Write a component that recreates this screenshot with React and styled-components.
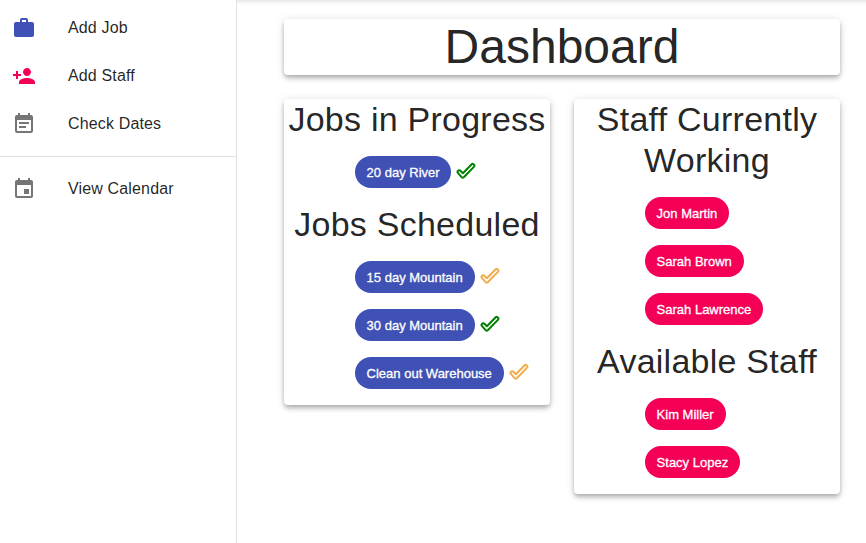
import React from "react";
import styled, { createGlobalStyle } from "styled-components";
import { MdWork, MdPersonAdd, MdEventNote, MdEvent } from "react-icons/md";

const GlobalStyle = createGlobalStyle`
  *, *::before, *::after { box-sizing: border-box; }
  body {
    margin: 0;
    background: #fff;
    color: rgba(0, 0, 0, 0.87);
    font-family: "Liberation Sans", Arial, sans-serif;
    overflow: hidden;
  }
`;

const Layout = styled.div`
  display: flex;
  height: 543px;
`;

const Sidebar = styled.nav`
  flex: 0 0 237px;
  padding-top: 4px;
  border-right: 1px solid #e0e0e0;
  background: #fff;
`;

const NavItem = styled.a`
  display: flex;
  align-items: center;
  height: 48px;
  padding-left: 12px;
  font-size: 16px;
  line-height: 24px;
  letter-spacing: 0.15px;
`;

const NavIcon = styled.span`
  display: flex;
  width: 56px;
  font-size: 24px;
  color: ${(p) => p.$color || "#757575"};
`;

const Divider = styled.hr`
  height: 1px;
  margin: 8px 0;
  border: 0;
  background: #e0e0e0;
`;

const Main = styled.main`
  flex: 1;
  padding: 19px 26px 0 47px;
  background: linear-gradient(#e6e6e6, #f3f3f3 2px, #fcfcfc 4px, #fff 6px);
`;

const Card = styled.section`
  background: #fff;
  border-radius: 4px;
  text-align: center;
  box-shadow: 0 2px 4px -1px rgba(0, 0, 0, 0.2), 0 4px 5px 0 rgba(0, 0, 0, 0.14),
    0 1px 10px 0 rgba(0, 0, 0, 0.12);
`;

const Title = styled.h1`
  margin: 0;
  font-size: 48px;
  font-weight: 400;
  line-height: 56px;
`;

const Columns = styled.div`
  display: grid;
  grid-template-columns: 1fr 1fr;
  align-items: start;
  gap: 24px;
  margin-top: 24px;
`;

const Heading = styled.h2`
  margin: 0;
  font-size: 34px;
  font-weight: 400;
  line-height: 41px;
  letter-spacing: 0.25px;
`;

const List = styled.ul`
  margin: 0;
  padding: 8px 0 8px 71px;
  list-style: none;
`;

const Row = styled.li`
  display: flex;
  align-items: center;
  height: 48px;
`;

const Chip = styled.span`
  height: 32px;
  padding: 0 11.9px 0 11.6px;
  border-radius: 16px;
  background: ${(p) => (p.$staff ? "#f50057" : "#3f51b5")};
  color: #fff;
  font-size: 13px;
  line-height: 33px;
  white-space: nowrap;
  -webkit-text-stroke: 0.3px #fff;
`;

const TickSvg = styled.svg`
  width: 20px;
  height: 18px;
  margin: -2px 0 0 5px;
  fill: none;
  stroke: ${(p) => p.$color};
  stroke-width: 2;
  stroke-linejoin: round;
`;

const Tick = ({ color }) => (
  <TickSvg viewBox="0 0 20 18" $color={color}>
    <path d="M1.8 9.1Q1.1 10.1 1.9 10.9L5.8 15.3Q6.8 16.2 7.8 15.3L18.1 4.6Q18.8 3.6 18 2.8L17.4 2.2Q16.5 1.4 15.7 2.2L6.9 11.3L4.4 8.7Q3.5 7.8 2.7 8.4Z" />
  </TickSvg>
);

const Jobs = ({ title, jobs }) => (
  <>
    <Heading>{title}</Heading>
    <List>
      {jobs.map(([name, ready]) => (
        <Row key={name}>
          <Chip>{name}</Chip>
          <Tick color={ready ? "#008000" : "#f0ad4e"} />
        </Row>
      ))}
    </List>
  </>
);

const Staff = ({ title, people }) => (
  <>
    <Heading>{title}</Heading>
    <List>
      {people.map((name) => (
        <Row key={name}>
          <Chip $staff>{name}</Chip>
        </Row>
      ))}
    </List>
  </>
);

export default function App() {
  return (
    <Layout>
      <GlobalStyle />
      <Sidebar>
        <NavItem><NavIcon $color="#3f51b5"><MdWork /></NavIcon>Add Job</NavItem>
        <NavItem><NavIcon $color="#f50057"><MdPersonAdd /></NavIcon>Add Staff</NavItem>
        <NavItem><NavIcon><MdEventNote /></NavIcon>Check Dates</NavItem>
        <Divider />
        <NavItem><NavIcon><MdEvent /></NavIcon>View Calendar</NavItem>
      </Sidebar>
      <Main>
        <Card><Title>Dashboard</Title></Card>
        <Columns>
          <Card>
            <Jobs title="Jobs in Progress" jobs={[["20 day River", true]]} />
            <Jobs
              title="Jobs Scheduled"
              jobs={[["15 day Mountain", false], ["30 day Mountain", true], ["Clean out Warehouse", false]]}
            />
          </Card>
          <Card>
            <Staff title="Staff Currently Working" people={["Jon Martin", "Sarah Brown", "Sarah Lawrence"]} />
            <Staff title="Available Staff" people={["Kim Miller", "Stacy Lopez"]} />
          </Card>
        </Columns>
      </Main>
    </Layout>
  );
}
